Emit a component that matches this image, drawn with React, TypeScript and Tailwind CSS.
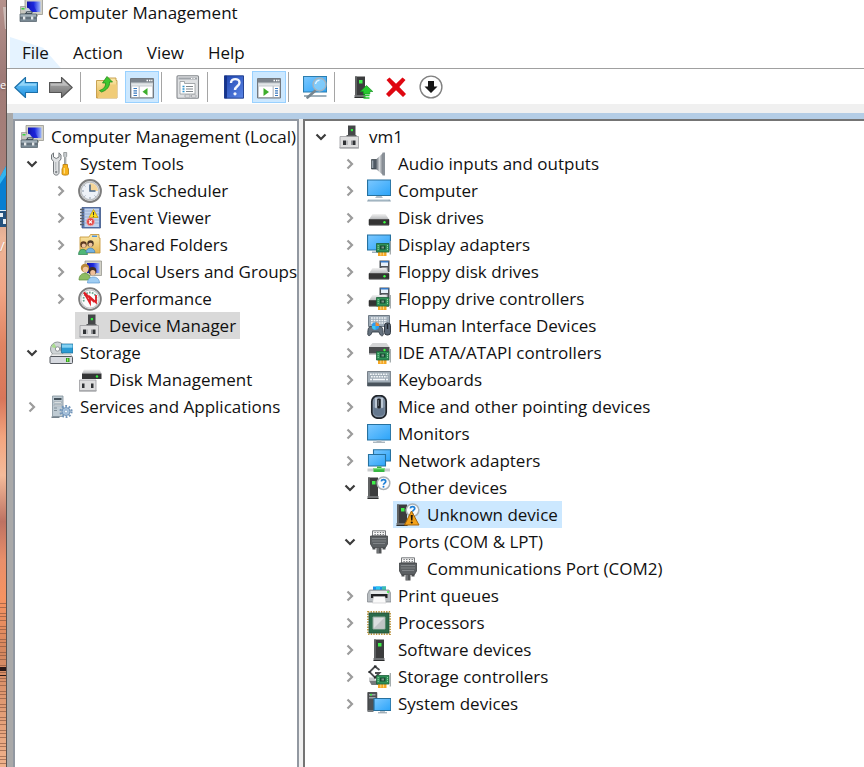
import React, { useState } from 'react';
import clsx from 'clsx';

const Svg = ({ children, className }: { children: React.ReactNode; className?: string }) => (
  <svg viewBox="0 0 24 24" className={clsx('h-6 w-6 shrink-0', className)} aria-hidden="true">
    {children}
  </svg>
);

/* ---------- shared icon parts ---------- */

const Gradients = () => (
  <svg className="absolute h-0 w-0" aria-hidden="true">
    <defs>
      <linearGradient id="screen" x1="0" y1="0" x2="1" y2="1">
        <stop offset="0" stopColor="#7cc8ff" />
        <stop offset="1" stopColor="#2ba4f9" />
      </linearGradient>
      <linearGradient id="arrowBlue" x1="0" y1="0" x2="0" y2="1">
        <stop offset="0" stopColor="#7fd0fa" />
        <stop offset="1" stopColor="#1d8fe0" />
      </linearGradient>
      <linearGradient id="arrowGray" x1="0" y1="0" x2="0" y2="1">
        <stop offset="0" stopColor="#b5b5b5" />
        <stop offset="1" stopColor="#6f6f6f" />
      </linearGradient>
      <linearGradient id="folder" x1="0" y1="0" x2="0" y2="1">
        <stop offset="0" stopColor="#fce9a9" />
        <stop offset="1" stopColor="#e5b655" />
      </linearGradient>
      <linearGradient id="crt" x1="0" y1="0" x2="1" y2="0">
        <stop offset="0" stopColor="#1212a8" />
        <stop offset="0.5" stopColor="#1c2be0" />
        <stop offset="1" stopColor="#9fb8f8" />
      </linearGradient>
      <linearGradient id="metal" x1="0" y1="0" x2="1" y2="0">
        <stop offset="0" stopColor="#59616a" />
        <stop offset="0.5" stopColor="#d5d8db" />
        <stop offset="1" stopColor="#777d84" />
      </linearGradient>
      <linearGradient id="silver" x1="0" y1="0" x2="0" y2="1">
        <stop offset="0" stopColor="#f2f2f2" />
        <stop offset="1" stopColor="#b4b6b8" />
      </linearGradient>
      <linearGradient id="help" x1="0" y1="0" x2="1" y2="1">
        <stop offset="0" stopColor="#1f45b0" />
        <stop offset="1" stopColor="#5b86e6" />
      </linearGradient>
      <linearGradient id="sunset" x1="0" y1="0" x2="0" y2="1">
        <stop offset="0" stopColor="#b5928c" />
        <stop offset="0.1" stopColor="#9f7b77" />
        <stop offset="0.22" stopColor="#a88079" />
        <stop offset="0.31" stopColor="#edb699" />
        <stop offset="0.38" stopColor="#f0a585" />
        <stop offset="0.45" stopColor="#e08462" />
        <stop offset="0.52" stopColor="#d8765a" />
        <stop offset="0.57" stopColor="#f3a57f" />
        <stop offset="0.62" stopColor="#f4bb9a" />
        <stop offset="0.68" stopColor="#bd7262" />
        <stop offset="0.73" stopColor="#e98f6a" />
        <stop offset="0.78" stopColor="#f79361" />
        <stop offset="0.85" stopColor="#d4875f" />
        <stop offset="1" stopColor="#efb28c" />
      </linearGradient>
    </defs>
  </svg>
);

const Card = () => (
  <g>
    <path d="M11 18.500h8.500v4.500H11z" fill="#f5a623" />
    <path d="M13.800 19v3.500M16.600 19v3.500" stroke="#fff0b8" strokeWidth="0.7" />
    <path d="M9.500 10.500H22v8.500H9.500z" fill="#2f9057" stroke="#1c6038" strokeWidth="0.8" />
    <path d="M13 12.500h5.500v4H13z" fill="#174c32" />
    <path d="M14.500 13.500h2.500v2h-2.500z" fill="#7b9788" />
    <path d="M11.200 12v5M20.500 12v5" stroke="#9be0ae" strokeWidth="0.9" strokeDasharray="1.200 0.800" />
    <path d="M23.300 8v13.500" stroke="#9aa3a4" strokeWidth="1.200" />
  </g>
);

const FloppyDisk = () => (
  <g>
    <path d="M12.500 0.500h10V12h-10z" fill="#4e5358" />
    <path d="M14 1.500h7V6h-7z" fill="#e7f1fa" />
    <path d="M13.500 1h8v1.500h-8z" fill="#3478c8" />
    <path d="M14.500 7.500h6V12h-6z" fill="#c9cdd1" />
  </g>
);

const Drive = ({ y = 0 }: { y?: number }) => (
  <g transform={`translate(0 ${y})`}>
    <path d="M5.500 8h13l3.500 5.500H2z" fill="url(#silver)" />
    <path d="M2 13.500h20v5.500H2z" fill="#343434" stroke="#1d1d1d" strokeWidth="0.5" />
    <path d="M2 18.800h20v1H2z" fill="#88898a" />
    <circle cx="17.500" cy="16.300" r="1.200" fill="#3cff42" />
  </g>
);

const Crt = () => (
  <g>
    <path d="M6 0.500h17.500v15H6z" fill="#d3d2c8" stroke="#8c8c84" strokeWidth="0.7" />
    <path d="M8 2.500h13.500v10.500H8z" fill="url(#crt)" />
    <path d="M8 13l6-8 4 8z" fill="#1a1fd0" opacity="0.7" />
    <path d="M10 15.500h9v2h-9z" fill="#a8a89f" />
  </g>
);

const Adapter = () => (
  <g>
    <path d="M2 11.500h18.500v11.500H2z" fill="#dededf" stroke="#9a9b9e" strokeWidth="0.8" />
    <path d="M1.500 22h19.500v1.500H1.500z" fill="#a9aaad" />
    <path d="M5 15.500h3v4.500H5zM14.500 15.500h3v4.500h-3z" fill="#303236" />
    <path d="M8.500 15.500h1v4.500h-1zM13 15.500h1v4.500h-1z" fill="#94969b" />
  </g>
);

const Tower = ({ x = 0 }: { x?: number }) => (
  <g transform={`translate(${x} 0)`}>
    <path d="M1 1.500h10V20H1z" fill="#3b3c3d" />
    <path d="M1 1.500h2V20H1z" fill="#606263" />
    <path d="M0.500 20h11v2.500H0.500z" fill="#6f7173" />
    <path d="M0.500 22h11v1H0.500z" fill="#2c2d2e" />
    <path d="M5 5h3.500v3.500H5z" fill="#3df04a" />
  </g>
);

const Question = () => (
  <g>
    <circle cx="16.500" cy="7.200" r="6.300" fill="#fafcfd" stroke="#a9b1b5" strokeWidth="1.500" />
    <path d="M14.300 5.300c0.300-2.400 4.400-2.300 4.400 0.200 0 1.600-2.200 1.700-2.200 3.300" fill="none" stroke="#1c7fd6" strokeWidth="1.700" />
    <circle cx="16.500" cy="10.800" r="1" fill="#1c7fd6" />
  </g>
);

const Gear = ({ cx, cy }: { cx: number; cy: number }) => (
  <g>
    <circle cx={cx} cy={cy} r="5.500" fill="none" stroke="#7396ba" strokeWidth="2.200" strokeDasharray="1.800 1.700" />
    <circle cx={cx} cy={cy} r="4" fill="#a9c4de" stroke="#6f93b8" strokeWidth="1" />
    <circle cx={cx} cy={cy} r="1.500" fill="#f4f9fd" stroke="#6f93b8" strokeWidth="0.6" />
  </g>
);

/* ---------- tree icons ---------- */

const icons = {
  management: (
    <Svg>
      <Crt />
      <path d="M1.500 7.500h5v7h-5z" fill="#c8c8c0" stroke="#888880" strokeWidth="0.6" />
      <path d="M2.500 9h3v1.500h-3z" fill="#38d442" />
      <path d="M6 11c0-3 4-3 5 0l4 4H7z" fill="#cbd1d6" />
      <path d="M6 14.500h7v-1.700H7.500v1.700" fill="none" stroke="#3d4b55" strokeWidth="1" />
      <path d="M1 15h16.500v7.500H1z" fill="#788893" stroke="#4e5c66" strokeWidth="0.7" />
      <path d="M1.500 15.500h15.500v2H1.500z" fill="#a5b2bb" />
      <path d="M1 19h16.500" stroke="#46525b" strokeWidth="0.8" />
      <path d="M4 17.500h2.300v3H4zM12 17.500h2.300v3H12z" fill="#e3e7e9" />
    </Svg>
  ),
  tools: (
    <Svg>
      <path d="M4.500 0.800 2.500 3v4l2 2.500v11c0 3.500 5.500 3.500 5.500 0v-11L12 7V3l-2-2.200V5L7.200 6.500 4.500 5z" fill="#dfe1e3" stroke="#73787c" strokeWidth="1" />
      <circle cx="7.200" cy="20" r="1.200" fill="#858a8e" />
      <path d="M6.800 10v8" stroke="#a7acb0" strokeWidth="0.9" />
      <path d="M14.700 0.500h3v3.800l-0.800 1.200V13h-1.400V5.500l-0.800-1.200z" fill="#c7cbce" stroke="#6f7376" strokeWidth="0.6" />
      <path d="M14 12.500h4.500v2.500l1 2v5c0 1.500-6.500 1.500-6.500 0v-5l1-2z" fill="#f7b31c" stroke="#b87808" strokeWidth="0.8" />
      <path d="M15.300 16v5.500" stroke="#ffe9a0" strokeWidth="1" />
    </Svg>
  ),
  clock: (
    <Svg>
      <circle cx="12" cy="12" r="10.900" fill="#f1f3f7" stroke="#7d7d7d" strokeWidth="2" />
      <circle cx="12" cy="12" r="9" fill="#eef2f8" stroke="#bcbfc2" strokeWidth="1.400" />
      <path d="M12 12V4a8 8 0 0 1 8 8z" fill="#f5d599" />
      <path d="M12 5.500V12h5.500" fill="none" stroke="#4b6888" strokeWidth="1.600" />
      <path d="M12 18v2M4 12h2M6.400 17.600l1-1M17.600 17.600l-1-1M6.400 6.400l1 1" stroke="#8d9aaa" strokeWidth="1" />
    </Svg>
  ),
  event: (
    <Svg>
      <path d="M4 1.500h18.500V22H4z" fill="#5b7bb5" stroke="#3d5789" strokeWidth="0.8" />
      <path d="M6.500 2.500h14.500V21H6.500z" fill="#c2d3ed" />
      <path d="M6.500 5h14.500M6.500 8h14.500M6.500 11h14.500M6.500 14h14.500M6.500 17h14.500" stroke="#8fa5c8" strokeWidth="0.8" />
      <path d="M2 3.500h4M2 6.500h4M2 9.500h4M2 12.500h4M2 15.500h4M2 18.500h4" stroke="#5a616c" strokeWidth="1.300" />
      <path d="m15.500 3.500 4.500 8h-9z" fill="#ffe11c" stroke="#c59b10" strokeWidth="0.8" />
      <path d="M15.500 6v3M15.500 9.800v1" stroke="#333" strokeWidth="1.100" />
      <circle cx="12.500" cy="15.800" r="4" fill="#e24746" stroke="#f3b9b9" strokeWidth="0.7" />
      <path d="m11 14.300 3 3m0-3-3 3" stroke="#fff" strokeWidth="1.200" />
    </Svg>
  ),
  shared: (
    <Svg>
      <path d="M2 4h9l1.500-2.500H21V5h1v15H2z" fill="url(#folder)" stroke="#c79a3f" strokeWidth="0.9" />
      <path d="M14 2.500h5v1.500h-5z" fill="#4e93da" />
      <circle cx="5.500" cy="11.500" r="3.200" fill="#5b3920" />
      <circle cx="5.800" cy="12.700" r="2.100" fill="#f0c6a0" />
      <path d="M0.500 21.500c0-7 8.500-7 9 0z" fill="#4fb777" stroke="#2d8050" strokeWidth="0.7" />
      <circle cx="12.500" cy="10.500" r="3.200" fill="#4a3628" />
      <circle cx="12.500" cy="11.800" r="2.100" fill="#efc39d" />
      <path d="M8 19.500c0-6 8.500-6 9 0z" fill="#74b2e2" stroke="#3f7fb0" strokeWidth="0.7" />
    </Svg>
  ),
  users: (
    <Svg>
      <path d="M7 1h16.500v14.500H7z" fill="#d3d2c8" stroke="#8c8c84" strokeWidth="0.7" />
      <path d="M9 3h12.500v10H9z" fill="url(#crt)" />
      <circle cx="7" cy="8" r="4.200" fill="#b98a3c" />
      <circle cx="7.600" cy="9.500" r="2.800" fill="#f2c79d" />
      <path d="M1 20c0-9 11.500-9 11.500 0z" fill="#8dbd62" stroke="#5d8d3a" strokeWidth="0.7" />
      <circle cx="14.500" cy="11" r="3.900" fill="#3f2d22" />
      <circle cx="14.800" cy="12.700" r="2.600" fill="#efc09a" />
      <path d="M9.500 23c0-8 12-8 12 0z" fill="#9fcdf3" stroke="#5d98cf" strokeWidth="0.7" />
    </Svg>
  ),
  performance: (
    <Svg>
      <circle cx="12" cy="12" r="10.900" fill="#fff" stroke="#7d7d7d" strokeWidth="1.800" />
      <circle cx="12" cy="12" r="9.200" fill="#fbfcfc" stroke="#c6c8ca" strokeWidth="1.200" />
      <path d="M6 14.500a6.500 6.500 0 1 1 12 0" fill="none" stroke="#6ba48e" strokeWidth="1.800" strokeDasharray="1.700 1.200" />
      <path d="M6 5.500 12 16V10l6 5.500V8" fill="none" stroke="#df1f26" strokeWidth="1.800" />
      <path d="m6 5.500 10.500 9.500" stroke="#df1f26" strokeWidth="2" />
    </Svg>
  ),
  device: (
    <Svg>
      <path d="M10 0.500h7.500v11.500H10z" fill="#454749" />
      <path d="M8.500 10h10v2h-10z" fill="#5c5e60" />
      <path d="M12.800 4h2.200v2.200h-2.200z" fill="#31ee3d" />
      <Adapter />
    </Svg>
  ),
  storage: (
    <Svg>
      <circle cx="8.500" cy="8" r="7" fill="#cfd4d6" stroke="#8f9699" strokeWidth="1" />
      <path d="M8.500 8 2.500 6A7 7 0 0 1 5 2.300z" fill="#a8dc8d" />
      <path d="m8.500 8 6-4v8z" fill="#9ea6ab" />
      <circle cx="8.500" cy="8" r="2.200" fill="#fff" stroke="#858b8e" strokeWidth="0.9" />
      <path d="M12.500 3H24v9H12.500z" fill="#2b9bd3" stroke="#1b6792" strokeWidth="0.7" />
      <path d="M13 3.500h10.500v3.200H13z" fill="#85d1f2" />
      <path d="M3 13h18.500l2 3.500H1z" fill="#eceded" stroke="#9a9da0" strokeWidth="0.6" />
      <rect x="1" y="15.500" width="22.500" height="7" rx="1" fill="#d6d9df" stroke="#54585e" strokeWidth="1" />
      <path d="M17 17h3.500v4H17z" fill="#329a20" />
      <path d="M18 17.500h1.200v3H18z" fill="#8def55" />
    </Svg>
  ),
  disk: (
    <Svg>
      <path d="M6 1.500h15.500l2 4H4z" fill="url(#silver)" />
      <path d="M4 5.500h19.500V11H4z" fill="#343536" />
      <circle cx="19" cy="8.500" r="1.200" fill="#36ef41" />
      <path d="M1.500 12h16.500v11H1.500z" fill="#dededf" stroke="#9a9b9e" strokeWidth="0.8" />
      <path d="M1 22h17.500v1.500H1z" fill="#a9aaad" />
      <path d="M4 15.500h2.500v4.500H4zM13 15.500h2.500v4.500H13z" fill="#303236" />
    </Svg>
  ),
  services: (
    <Svg>
      <path d="M3.500 1h10.500v20.500H3.500z" fill="#bfcbd3" stroke="#81909b" strokeWidth="0.8" />
      <path d="M5 3h7.500v2H5z" fill="#44525c" />
      <path d="M5 6.500h7.500v1.500H5zM5 9.500h7.500v1.200H5z" fill="#f5f7f8" stroke="#84919b" strokeWidth="0.5" />
      <path d="M5 13h3M5 15.500h3" stroke="#7f8d97" strokeWidth="1" />
      <path d="M2.500 21.500h8v1.500h-8z" fill="#75828c" />
      <Gear cx={17} cy={16.500} />
    </Svg>
  ),
  audio: (
    <Svg>
      <path d="M4.500 7.500h5v9.500h-5z" fill="#4f5963" stroke="#353d44" strokeWidth="0.7" />
      <path d="M9 7.500 16 1v22L9 17z" fill="url(#metal)" />
      <path d="M15.500 0.500h2.500v23h-2.500z" fill="#8a9198" />
      <path d="M4.800 8.500h1.500v7.500H4.800z" fill="#9ca6af" />
    </Svg>
  ),
  computer: (
    <Svg>
      <path d="M0.500 1h23.200v15.500H0.500z" fill="url(#screen)" stroke="#26719f" strokeWidth="1.200" />
      <path d="M9.500 17h5l1.500 2H8z" fill="#b3bec6" />
      <path d="M1 20.500h22l1 2H0z" fill="#94a8b6" />
      <path d="M2.500 20.500h19v0.700h-19z" fill="#dce7ed" />
    </Svg>
  ),
  drive: (
    <Svg>
      <Drive />
    </Svg>
  ),
  display: (
    <Svg>
      <path d="M0.500 2h23v15H0.500z" fill="url(#screen)" stroke="#26719f" strokeWidth="1.200" />
      <path d="M5 18.500h8v1.500H5z" fill="#9fb0bd" />
      <Card />
    </Svg>
  ),
  floppy: (
    <Svg>
      <FloppyDisk />
      <Drive />
    </Svg>
  ),
  floppyController: (
    <Svg>
      <FloppyDisk />
      <Drive />
      <Card />
    </Svg>
  ),
  hid: (
    <Svg>
      <path d="M1.500 1.500h21v11h-21z" fill="#9eabb7" stroke="#65717c" strokeWidth="0.9" />
      <path d="M4 4h16M4 6.500h16M4 9h16" stroke="#f1f5f8" strokeWidth="1.300" strokeDasharray="1.800 0.800" />
      <path d="M0.800 20.500c0-6 0.700-8 3.700-8h8c3 0 3.500 2 3.800 8-0.500 2.500-3.300 1.500-4.300-2.500H5C4 22 1.300 22.500 0.800 20.500z" fill="#66727e" stroke="#333c46" strokeWidth="0.9" />
      <circle cx="8.500" cy="12" r="3.700" fill="#2f9df1" />
      <path d="M8.500 8.300a3.700 3.700 0 0 1 3.700 3.700H8.500z" fill="#f08b35" />
      <path d="M4.800 12a3.700 3.700 0 0 0 3.700 3.700V12z" fill="#3dc9f4" />
      <rect x="17.500" y="9" width="6" height="12" rx="2.500" fill="#596574" stroke="#272f38" strokeWidth="0.9" />
      <path d="M20.500 10v5" stroke="#1c222a" strokeWidth="1.300" />
    </Svg>
  ),
  ide: (
    <Svg>
      <path d="M5.500 2h14l3 4H2z" fill="#d4d5d6" />
      <path d="M2 6h20.500v6.500H2z" fill="#4b4d4f" />
      <path d="M2 12.500h8v1H2z" fill="#8d8f91" />
      <Card />
      <circle cx="17.500" cy="9" r="1.200" fill="#3cff42" />
    </Svg>
  ),
  keyboard: (
    <Svg>
      <path d="M0.500 3.500h23.200V18H0.500z" fill="#a1adb7" stroke="#5f6a74" strokeWidth="0.8" />
      <path d="M0.500 14.500h23.200V18H0.500z" fill="#4a545d" />
      <path d="M3 6.200h18.500M4 8.700h16.500" stroke="#f5f8fa" strokeWidth="1.500" strokeDasharray="1.700 0.900" />
      <path d="M3 11.500h2M6 11.500h12M19 11.500h2" stroke="#f5f8fa" strokeWidth="1.500" />
    </Svg>
  ),
  mouse: (
    <Svg>
      <rect x="4.800" y="0.600" width="14.400" height="22.600" rx="6" fill="#8090a3" stroke="#20252b" strokeWidth="1.700" />
      <path d="M8 2.800h8v10H8z" fill="#bcc8d4" />
      <path d="M6.500 12c3 2.500 8 2.500 11 0v6c-1 4-10 4-11 0z" fill="#65788e" />
      <rect x="10.200" y="3.500" width="3.600" height="10" rx="1" fill="#1e2328" />
      <path d="M11.500 5v6" stroke="#626b74" strokeWidth="0.9" />
    </Svg>
  ),
  monitor: (
    <Svg>
      <path d="M0.500 2.500h23.200V18H0.500z" fill="url(#screen)" stroke="#26719f" strokeWidth="1.200" />
      <path d="M9.500 18.500h5V20h-5z" fill="#c0c8ce" />
      <path d="M6 19.700h12v1H6z" fill="#8798a4" />
    </Svg>
  ),
  network: (
    <Svg>
      <path d="M6.500 0.800h17V12h-17z" fill="url(#screen)" stroke="#26719f" strokeWidth="1.100" />
      <path d="M1.500 5.500h17V17h-17z" fill="url(#screen)" stroke="#26719f" strokeWidth="1.100" />
      <path d="M10 17.500h4.500v2H10z" fill="#3fae47" />
      <path d="M0.500 19.500h22.500v3H0.500z" fill="#c9cdce" />
      <path d="M6.500 19h11v4h-11z" fill="#37b943" />
      <path d="M6.500 19h11v1.300h-11z" fill="#83e681" />
    </Svg>
  ),
  other: (
    <Svg>
      <Tower />
      <Question />
    </Svg>
  ),
  unknown: (
    <Svg>
      <Tower />
      <Question />
      <path d="m15.500 8 7.500 14H8.500z" fill="#f3a21a" stroke="#a4650a" strokeWidth="1" strokeLinejoin="round" />
      <path d="M14.700 12h2.100l-0.400 5.500h-1.300z" fill="#1c1508" />
      <circle cx="15.750" cy="19.500" r="1.100" fill="#1c1508" />
    </Svg>
  ),
  port: (
    <Svg>
      <path d="M5.500 0.800h13V6h-13z" fill="#f4f4f4" stroke="#777a7d" strokeWidth="1" />
      <path d="M7.500 2.500h9.500M7.500 4.500h9.500" stroke="#686b6e" strokeWidth="1" strokeDasharray="1.200 1.500" />
      <path d="M3.500 6h17v8l-2 3.500h-13l-2-3.500z" fill="#5c6063" stroke="#3d4042" strokeWidth="0.8" />
      <path d="M5 8.500h14M5 11h14M6 13.500h12" stroke="#84888b" strokeWidth="0.9" />
      <path d="M5.500 17h3v2.500h-3zM15.500 17h3v2.500h-3z" fill="#4b4e50" />
      <path d="M9.500 17.500h5v6h-5z" fill="#505355" />
      <path d="M11 18v5" stroke="#8e9295" strokeWidth="1" />
    </Svg>
  ),
  printer: (
    <Svg>
      <path d="M6 2.500h13V8H6z" fill="#1b92e8" />
      <path d="M9 2.500h4V7H9z" fill="#29c7f3" />
      <path d="M15 2.500h4V7h-4z" fill="#3fbfae" />
      <path d="M2.500 6h19.500l2 4v8H0.500v-8z" fill="#b9bec2" stroke="#7a8085" strokeWidth="0.7" />
      <path d="M3.500 7h17.500v3H3.500z" fill="#e5e8e9" />
      <path d="M4 10h16.500v4H4z" fill="#202224" />
      <path d="M6.500 12.500h11.500l1 6.500H5.500z" fill="#fafafa" stroke="#b5b7b8" strokeWidth="0.5" />
      <circle cx="21" cy="8" r="1.100" fill="#44f04d" />
    </Svg>
  ),
  processor: (
    <Svg>
      <path d="M0.900 0.900h22.200v22.200H0.900z" fill="none" stroke="#b99139" strokeWidth="1.600" strokeDasharray="1.400 1.200" />
      <path d="M2 2h20v20H2z" fill="#2b6b4a" stroke="#1e4e35" strokeWidth="0.8" />
      <path d="M6 6h12v12H6z" fill="#dbdedf" stroke="#8fa89a" strokeWidth="1" />
      <path d="M6.500 17.500 17.500 6.500v11z" fill="#c1c5c7" />
    </Svg>
  ),
  software: (
    <Svg>
      <Tower x={6} />
    </Svg>
  ),
  controller: (
    <Svg>
      <path d="M2 15.500h12v4.500H4.500z" fill="#75787b" />
      <path d="M2 12.500h5l2 3H2z" fill="#c8cacc" />
      <path d="M12.500 5 8 1.500 2.500 7 8 12.500l4.500-4.500H8" fill="none" stroke="#4c4e50" strokeWidth="1.800" />
      <path d="M7 0.500h2.500v2H7zM1.500 6h2v2h-2zM7 11.500h2v2H7z" fill="#292b2d" />
      <Card />
    </Svg>
  ),
  system: (
    <Svg>
      <path d="M0.800 0.500h9v18h-9z" fill="#4d5053" stroke="#2e3133" strokeWidth="0.7" />
      <path d="M2 2h6.500v1.500H2zM2 5h6.500v1.500H2z" fill="#9da2a5" />
      <circle cx="4" cy="2.700" r="1" fill="#3ceb46" />
      <path d="M0.500 18h6v2h-6z" fill="#777b7e" />
      <path d="M7 6.500h16.800V18.500H7z" fill="url(#screen)" stroke="#26719f" strokeWidth="1.200" />
      <path d="M13 19h5v1.500h-5z" fill="#b8c3ca" />
      <path d="M11 20.300h9v1h-9z" fill="#8798a4" />
    </Svg>
  ),
};

/* ---------- toolbar icons ---------- */

const BackIcon = () => (
  <Svg>
    <path d="M11.500 2.500v5H23.500v10H11.500v5L0.800 12.500z" fill="url(#arrowBlue)" stroke="#1b6fa8" strokeWidth="1.100" strokeLinejoin="round" />
    <path d="M10.300 5.200v3.600h12v2H7L4 11z" fill="#a9e0fb" opacity="0.7" />
  </Svg>
);

const ForwardIcon = () => (
  <Svg>
    <path d="M12.500 2.500v5H0.500v10h12v5L23.200 12.500z" fill="url(#arrowGray)" stroke="#555" strokeWidth="1.100" strokeLinejoin="round" />
    <path d="M13.700 5.200v3.600H1.800v2H17l3 0.200z" fill="#d4d4d4" opacity="0.6" />
  </Svg>
);

const UpFolderIcon = () => (
  <Svg>
    <path d="M1.500 5.500h9L12.500 3H21v2.500h1V23H1.500z" fill="url(#folder)" stroke="#c39a45" strokeWidth="0.9" />
    <path d="M3 22 8 9.500h14V23H3z" fill="#f0cc78" />
    <path d="M4.500 15.500C9.500 14 11 10.500 10.500 8H7.500L12 1.500 17.500 7h-3c0.500 4.500-3 8.500-8 10z" fill="#3fc62f" stroke="#248b1c" strokeWidth="0.8" />
  </Svg>
);

// console window with a side pane on the left or on the right
const ConsoleIcon = ({ side }: { side: 'left' | 'right' }) => (
  <Svg>
    <path d="M0.500 3.500h23V23H0.500z" fill="#c6cbd0" stroke="#737980" strokeWidth="1" />
    <path d="M1 4h22v3.500H1z" fill="#7b838b" />
    <path d="M16.500 5.500h1.500M19 5.500h1.500M21.200 5.500h1.200" stroke="#fff" strokeWidth="1.300" />
    <path d="M1.500 8.500h21v2h-21z" fill="#e3e6e8" />
    {side === 'left' ? (
      <g>
        <path d="M2 11.500h6.500V22H2zM10 11.500h12V22H10z" fill="#fff" />
        <path d="M3.500 13.500h3.500M3.500 15.800h3.500M3.500 18.200h3.500M3.500 20.500h3.500" stroke="#3878bd" strokeWidth="1.200" />
        <path d="M17.500 13v7.500l-5-3.800z" fill="#3eae2d" />
      </g>
    ) : (
      <g>
        <path d="M2 11.500h13.500V22H2zM17 11.500h5V22h-5z" fill="#fff" />
        <path d="M18 13.500h3M18 15.800h3M18 18.200h3M18 20.500h3" stroke="#3878bd" strokeWidth="1.200" />
        <path d="M6.500 13v8l5.500-4z" fill="#3eae2d" />
      </g>
    )}
  </Svg>
);

const PropertiesIcon = () => (
  <Svg>
    <rect x="1" y="0.800" width="21.500" height="22.500" rx="1" fill="#dfe1e3" stroke="#84888c" strokeWidth="1.100" />
    <path d="M2.500 2.500h18.500v2H2.500z" fill="#a0a5aa" />
    <path d="M15 3.500h1.300M17.500 3.500h1.300" stroke="#fff" strokeWidth="1" />
    <path d="M4 6.500h4.500v2H19v10.500H4z" fill="#fff" stroke="#92979b" strokeWidth="0.8" />
    <path d="M6.500 11.500h2M6.500 14h2M6.500 16.500h2" stroke="#2d94cf" strokeWidth="1.300" />
    <path d="M10 11.500h7M10 14h7M10 16.500h7" stroke="#7f868b" strokeWidth="1.100" />
    <path d="M9 20h5v2H9zM15.500 20H20v2h-4.500z" fill="#fafafa" stroke="#92979b" strokeWidth="0.7" />
  </Svg>
);

const HelpIcon = () => (
  <Svg>
    <path d="M2.500 0.800h19v22.400h-19z" fill="url(#help)" stroke="#173789" strokeWidth="0.9" />
    <path d="M2.500 0.800h2.500v22.400H2.500z" fill="#16348c" />
    <path d="M9 8c0-5.300 8.500-5 8.500-0.300 0 3.500-4.500 3.600-4.500 7.300" fill="none" stroke="#f3f6fd" strokeWidth="2.400" />
    <circle cx="13" cy="18.800" r="1.600" fill="#f3f6fd" />
  </Svg>
);

const ScanIcon = () => (
  <Svg>
    <path d="M0.500 1.500h23.200v15.500H0.500z" fill="url(#screen)" stroke="#2b7dae" strokeWidth="1.100" />
    <path d="M1 20h22.500v2H1z" fill="#9fb0bb" />
    <path d="m12.500 15.500-8 7" stroke="#76858f" strokeWidth="2.600" strokeLinecap="round" />
    <circle cx="16.500" cy="9.500" r="6.500" fill="#8dd1fa" fillOpacity="0.8" stroke="#a3b3be" strokeWidth="1.400" />
    <path d="M12.500 9c0.500-2.500 2-3.500 4-3.800" fill="none" stroke="#e5f5ff" strokeWidth="1.200" />
  </Svg>
);

const UpdateDriverIcon = () => (
  <Svg>
    <Tower x={5} />
    <path d="M17.500 10.500 23.800 16.500h-3V19h-6.500v-2.500h-3z" fill="#26c92f" stroke="#169320" strokeWidth="0.7" />
    <path d="M14.500 20.500h6M14.500 23h6" stroke="#26c92f" strokeWidth="1.600" />
  </Svg>
);

const UninstallIcon = () => (
  <Svg>
    <path d="M2.500 5 5.500 2.500 12 8.800 18.500 2.500 21.500 5 15.300 12 22 19l-3 3-7-6.700L5 22l-3-3 6.700-7z" fill="#df0711" />
  </Svg>
);

const DisableIcon = () => (
  <Svg>
    <circle cx="12" cy="12" r="10.900" fill="#fff" stroke="#808080" strokeWidth="1.400" />
    <path d="M9 6h6v5.500h3.500L12 18l-6.500-6.500H9z" fill="#161616" />
  </Svg>
);

/* ---------- tree ---------- */

interface TreeNode {
  label: string;
  icon: keyof typeof icons;
  expandable?: boolean;
  children?: TreeNode[];
}

const consoleTree: TreeNode = {
  label: 'Computer Management (Local)',
  icon: 'management',
  children: [
    {
      label: 'System Tools',
      icon: 'tools',
      expandable: true,
      children: [
        { label: 'Task Scheduler', icon: 'clock', expandable: true },
        { label: 'Event Viewer', icon: 'event', expandable: true },
        { label: 'Shared Folders', icon: 'shared', expandable: true },
        { label: 'Local Users and Groups', icon: 'users', expandable: true },
        { label: 'Performance', icon: 'performance', expandable: true },
        { label: 'Device Manager', icon: 'device' },
      ],
    },
    {
      label: 'Storage',
      icon: 'storage',
      expandable: true,
      children: [{ label: 'Disk Management', icon: 'disk' }],
    },
    { label: 'Services and Applications', icon: 'services', expandable: true },
  ],
};

const deviceTree: TreeNode = {
  label: 'vm1',
  icon: 'device',
  expandable: true,
  children: [
    { label: 'Audio inputs and outputs', icon: 'audio', expandable: true },
    { label: 'Computer', icon: 'computer', expandable: true },
    { label: 'Disk drives', icon: 'drive', expandable: true },
    { label: 'Display adapters', icon: 'display', expandable: true },
    { label: 'Floppy disk drives', icon: 'floppy', expandable: true },
    { label: 'Floppy drive controllers', icon: 'floppyController', expandable: true },
    { label: 'Human Interface Devices', icon: 'hid', expandable: true },
    { label: 'IDE ATA/ATAPI controllers', icon: 'ide', expandable: true },
    { label: 'Keyboards', icon: 'keyboard', expandable: true },
    { label: 'Mice and other pointing devices', icon: 'mouse', expandable: true },
    { label: 'Monitors', icon: 'monitor', expandable: true },
    { label: 'Network adapters', icon: 'network', expandable: true },
    {
      label: 'Other devices',
      icon: 'other',
      expandable: true,
      children: [{ label: 'Unknown device', icon: 'unknown' }],
    },
    {
      label: 'Ports (COM & LPT)',
      icon: 'port',
      expandable: true,
      children: [{ label: 'Communications Port (COM2)', icon: 'port' }],
    },
    { label: 'Print queues', icon: 'printer', expandable: true },
    { label: 'Processors', icon: 'processor', expandable: true },
    { label: 'Software devices', icon: 'software', expandable: true },
    { label: 'Storage controllers', icon: 'controller', expandable: true },
    { label: 'System devices', icon: 'system', expandable: true },
  ],
};

interface TreeItemProps {
  node: TreeNode;
  selected: string;
  onSelect: (label: string) => void;
  selectedClass: string;
  root?: boolean;
}

const TreeItem: React.FC<TreeItemProps> = ({ node, selected, onSelect, selectedClass, root }) => {
  const [open, setOpen] = useState(Boolean(node.children));
  const noToggle = root && !node.expandable;

  return (
    <li>
      <div className="flex h-[27px] items-center">
        {!noToggle && (
          <span className="mr-0.5 flex w-6 shrink-0 justify-center">
            {node.expandable && (
              <button
                type="button"
                aria-label={`${open ? 'Collapse' : 'Expand'} ${node.label}`}
                onClick={() => setOpen(!open)}
              >
                <svg viewBox="0 0 12 12" className="h-3 w-3" fill="none" strokeWidth="2.200">
                  {open ? (
                    <path d="M1.500 3.500 6 8l4.500-4.500" stroke="#3c3c3c" />
                  ) : (
                    <path d="M3.500 1.500 8 6l-4.500 4.500" stroke="#9c9c9c" />
                  )}
                </svg>
              </button>
            )}
          </span>
        )}
        <button
          type="button"
          onClick={() => onSelect(node.label)}
          className={clsx(
            'flex h-[27px] items-center gap-[7px] whitespace-nowrap pr-1',
            noToggle ? 'pl-0' : 'pl-[3px]',
            selected === node.label && selectedClass,
          )}
        >
          {icons[node.icon]}
          {node.label}
        </button>
      </div>
      {node.children && open && (
        <ul className={noToggle ? '' : 'pl-[29px]'}>
          {node.children.map((child) => (
            <TreeItem
              key={child.label}
              node={child}
              selected={selected}
              onSelect={onSelect}
              selectedClass={selectedClass}
            />
          ))}
        </ul>
      )}
    </li>
  );
};

const ToolButton = ({ label, active, children }: { label: string; active?: boolean; children: React.ReactNode }) => (
  <button
    type="button"
    aria-label={label}
    className={clsx(
      'flex h-8 w-[34px] shrink-0 items-center justify-center border',
      active ? 'border-[#99d1ff] bg-[#cce8ff]' : 'border-transparent',
    )}
  >
    {children}
  </button>
);

const Separator = () => <span className="mr-2 ml-px h-[30px] w-px shrink-0 bg-[#a5a5a5]" />;

// sliver of the desktop that shows beside the window
const Desktop = () => (
  <div className="relative w-[7px] shrink-0 border-r border-[#5c5350]">
    <svg viewBox="0 0 6 767" preserveAspectRatio="none" className="absolute inset-0 h-full w-full" aria-hidden="true">
      <path d="M0 0h6v767H0z" fill="url(#sunset)" />
      <path d="M3 7h3v22H5z" fill="#ccbcb8" />
      <path d="M0 177 6 166v44H0z" fill="#087fd2" />
      <path d="M0 177 6 166v9l-6 9z" fill="#31b4ef" />
      <path d="M0 210h6v17H0z" fill="#24527e" />
      <path d="M0 210h6v1H0zM0 213h3v4H0zM3 219h3v5H3z" fill="#e9f0f5" />
      <path d="M3 603v164" stroke="#81503b" strokeWidth="6" strokeDasharray="1 3 1 5 1 2" strokeOpacity="0.6" />
      <path d="M0 667h6v4H0zM0 675h6v1H0z" fill="#2b1917" />
    </svg>
    <span className="absolute top-[75px] left-0 text-[11px] leading-5 text-white text-shadow-sm">e</span>
    <span className="absolute top-[236px] left-0 text-[13px] leading-5 text-white text-shadow-sm">/</span>
  </div>
);

export default function App() {
  const [consoleSelected, setConsoleSelected] = useState('Device Manager');
  const [deviceSelected, setDeviceSelected] = useState('Unknown device');

  return (
    <div className="flex min-h-screen font-['Open_Sans','Noto_Sans',sans-serif] text-[17px] leading-6 text-[#111]">
      <Gradients />
      <Desktop />
      <div className="flex min-w-0 flex-1 flex-col bg-white">
        <header className="flex h-[37px] items-start gap-[5px] pt-px pl-3">
          {React.cloneElement(icons.management, { className: '-mt-0.5' })}
          <h1>Computer Management</h1>
        </header>

        <nav className="flex h-[31px] pl-[3px]">
          {['File', 'Action', 'View', 'Help'].map((item, i) => (
            <button key={item} type="button" className="relative px-3">
              {i === 0 && (
                <span className="absolute inset-0 bg-[#e5f3ff] [clip-path:polygon(0_0,65%_35%,100%_100%,0_100%)]" />
              )}
              <span className="relative">{item}</span>
            </button>
          ))}
        </nav>

        <div className="flex h-9 items-center gap-px border-t border-[#a0a0a0] pl-0.5">
          <ToolButton label="Back"><BackIcon /></ToolButton>
          <ToolButton label="Forward"><ForwardIcon /></ToolButton>
          <Separator />
          <ToolButton label="Up one level"><UpFolderIcon /></ToolButton>
          <ToolButton label="Show/Hide Console Tree" active><ConsoleIcon side="left" /></ToolButton>
          <Separator />
          <ToolButton label="Properties"><PropertiesIcon /></ToolButton>
          <Separator />
          <ToolButton label="Help"><HelpIcon /></ToolButton>
          <ToolButton label="Show/Hide Action Pane" active><ConsoleIcon side="right" /></ToolButton>
          <Separator />
          <ToolButton label="Scan for hardware changes"><ScanIcon /></ToolButton>
          <Separator />
          <ToolButton label="Update driver"><UpdateDriverIcon /></ToolButton>
          <ToolButton label="Uninstall device"><UninstallIcon /></ToolButton>
          <ToolButton label="Disable device"><DisableIcon /></ToolButton>
        </div>
        <div className="h-[9px] bg-[#f0f0f0]" />

        <main className="flex flex-1 border-l-[6px] border-[#a9a9a9]">
          <div className="flex min-w-0 flex-1 flex-col">
            <div className="h-1.5 bg-[#b4cde6]" />
            <div className="flex flex-1 bg-[#f0f0f0]">
              <section className="w-[286px] shrink-0 border-2 border-b-0 border-[#9298a1] bg-white pt-0.5 pl-[5px]">
                <ul>
                  <TreeItem
                    root
                    node={consoleTree}
                    selected={consoleSelected}
                    onSelect={setConsoleSelected}
                    selectedClass="bg-[#d9d9d9]"
                  />
                </ul>
              </section>
              <section className="ml-1 min-w-0 flex-1 border-t-2 border-l-2 border-[#747474] bg-white pt-0.5 pl-1">
                <ul>
                  <TreeItem
                    root
                    node={deviceTree}
                    selected={deviceSelected}
                    onSelect={setDeviceSelected}
                    selectedClass="bg-[#cce8ff]"
                  />
                </ul>
              </section>
            </div>
          </div>
        </main>
      </div>
    </div>
  );
}
